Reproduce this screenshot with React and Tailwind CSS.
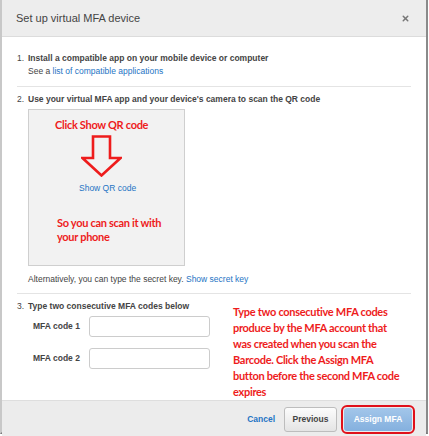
import { X } from 'lucide-react';

const sans = "font-['Liberation_Sans',Arial,sans-serif]";
const note = "font-['Lato','Open_Sans',sans-serif] font-bold text-[#ee1c1c] text-[11px] tracking-[-0.3px] whitespace-nowrap";

function DownArrow() {
  return (
    <svg width="41" height="42" viewBox="0 0 41 42" className="block">
      <path
        d="M12 1.5 H29 V23 H39.5 L20.5 40.5 L1.5 23 H12 Z"
        fill="none"
        stroke="#ee1c1c"
        strokeWidth="2.6"
        strokeLinejoin="miter"
      />
    </svg>
  );
}

function MfaInput({ label }) {
  return (
    <div className="flex items-center">
      <span className="w-[56px] font-bold text-[#444]">{label}</span>
      <div className="w-[121px] h-[21px] bg-white border border-[#ccc] rounded-[3px]" />
    </div>
  );
}

export default function App() {
  return (
    <div className={`w-[429px] h-[436px] bg-white ${sans}`}>
      <div className="w-[428px] h-[434px] flex flex-col border-l-2 border-r-2 border-b-2 border-l-[#c8c8c8] border-r-[#8a8a8a] border-b-[#777]">
        {/* cabecera */}
        <div className="h-[37px] shrink-0 bg-[#ededed] border-b border-[#dcdcdc] flex items-center justify-between pl-[14px] pr-[16px]">
          <span className="text-[11px] text-[#444]">Set up virtual MFA device</span>
          <X size={9} strokeWidth={4} className="text-[#777]" />
        </div>

        {/* cuerpo */}
        <div className="flex-1 px-[15px] pt-[15px] text-[8.5px] leading-[13px] text-[#444]">
          <div className="flex">
            <span className="w-[11px]">1.</span>
            <div>
              <div className="font-bold">Install a compatible app on your mobile device or computer</div>
              <div>
                See a <span className="text-[#2574c4]">list of compatible applications</span>
              </div>
            </div>
          </div>

          <div className="h-px bg-[#e4e4e4] mt-[8px] mb-[6px]" />

          <div className="flex">
            <span className="w-[11px]">2.</span>
            <div>
              <div className="font-bold">Use your virtual MFA app and your device's camera to scan the QR code</div>
              <div className="mt-[3px] w-[157px] h-[157px] bg-[#f2f2f2] border border-[#cfcfcf] pl-[26px] pt-[7px]">
                <div className={`${note} leading-[15px]`}>Click Show QR code</div>
                <div className="ml-[26px] mt-[3px]">
                  <DownArrow />
                </div>
                <div className="ml-[24px] mt-[5px]">
                  <span className="text-[#2574c4]">Show QR code</span>
                </div>
                <div className={`${note} leading-[14px] mt-[21px] ml-[2px]`}>
                  So you can scan it with
                  <br />
                  your phone
                </div>
              </div>
              <div className="mt-[7px]">
                Alternatively, you can type the secret key. <span className="text-[#2574c4]">Show secret key</span>
              </div>
            </div>
          </div>

          <div className="h-px bg-[#e4e4e4] mt-[7px] mb-[6px]" />

          <div className="flex">
            <span className="w-[11px]">3.</span>
            <div className="w-[192px]">
              <div className="font-bold">Type two consecutive MFA codes below</div>
              <div className="mt-[3px] ml-[5px] flex flex-col gap-[11px]">
                <MfaInput label="MFA code 1" />
                <MfaInput label="MFA code 2" />
              </div>
            </div>
            <div className={`${note} leading-[16px] mt-[4px] ml-[13px]`}>
              Type two consecutive MFA codes
              <br />
              produce by the MFA account that
              <br />
              was created when you scan the
              <br />
              Barcode. Click the Assign MFA
              <br />
              button before the second MFA code
              <br />
              expires
            </div>
          </div>
        </div>

        {/* pie */}
        <div className="h-[37px] shrink-0 bg-[#ececec] border-t border-[#dedede] flex items-center justify-end pr-[11px] text-[8.5px] font-bold">
          <span className="text-[#2574c4]">Cancel</span>
          <button className="ml-[9px] w-[53px] h-[25px] rounded-[3px] border border-[#bdbdbd] bg-gradient-to-b from-[#fcfcfc] to-[#e4e4e4] text-[#444]">
            Previous
          </button>
          <div className="ml-[4px] rounded-[6px] border-2 border-[#e0101a] p-[1px]">
            <button className="w-[68px] h-[23px] rounded-[3px] bg-gradient-to-b from-[#a3c6ea] to-[#84b0de] text-white">
              Assign MFA
            </button>
          </div>
        </div>
      </div>
    </div>
  );
}
